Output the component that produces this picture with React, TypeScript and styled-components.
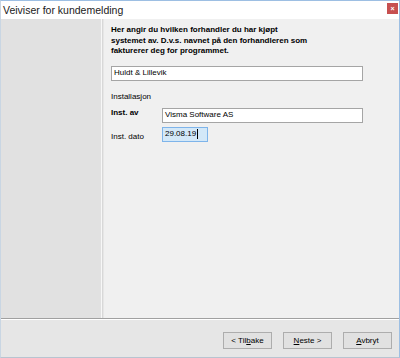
import styled, { createGlobalStyle } from "styled-components";

const Global = createGlobalStyle`
  html, body {
    margin: 0;
    padding: 0;
    background: #ffffff;
  }
  * {
    box-sizing: border-box;
  }
`;

const Window = styled.div`
  width: 400px;
  height: 358px;
  display: flex;
  flex-direction: column;
  border: 1px solid #9dbfe3;
  border-left-color: #c9d6e3;
  border-bottom-color: #b8c4d0;
  background: #e6e6e6;
  font-family: "Liberation Sans", Arial, sans-serif;
  font-size: 8px;
  color: #000;
`;

const TitleBar = styled.div`
  height: 18px;
  display: flex;
  align-items: flex-start;
  justify-content: space-between;
  background: #ffffff;
  padding-left: 2px;
`;

const Title = styled.span`
  font-size: 10.5px;
  line-height: 12px;
  margin-top: 3px;
  color: #1a1a1a;
`;

const CloseButton = styled.div`
  width: 11px;
  height: 11px;
  margin-top: 2px;
  margin-right: 1px;
  background: #c75050;
  display: flex;
  align-items: center;
  justify-content: center;
  color: #fff;
  font-size: 7px;
  line-height: 1;
  font-weight: bold;
`;

const Main = styled.div`
  height: 299px;
  display: flex;
`;

const SidePanel = styled.div`
  width: 101px;
  background: #e1e1e1;
  border-right: 1px solid #f7f7f7;
`;

const Divider = styled.div`
  width: 2px;
  background: #d8d8d8;
  border-right: 1px solid #e6e6e6;
`;

const Content = styled.div`
  flex: 1;
  background: #f0f0f0;
  padding: 6px 0 0 7px;
  display: flex;
  flex-direction: column;
`;

const Intro = styled.p`
  margin: 0;
  font-weight: bold;
  line-height: 10.5px;
  width: 200px;
`;

const TextField = styled.div<{ $width: number; $focused?: boolean }>`
  width: ${(p) => p.$width}px;
  height: 15px;
  display: flex;
  align-items: center;
  padding-left: 2px;
  background: ${(p) => (p.$focused ? "#d3e8f8" : "#ffffff")};
  border: 1px solid ${(p) => (p.$focused ? "#7eb4ea" : "#a5a5a5")};
  line-height: 1;
  white-space: nowrap;
`;

const Caret = styled.span`
  display: inline-block;
  width: 1px;
  height: 10px;
  background: #000;
  margin-left: 1px;
`;

const DealerField = styled(TextField)`
  margin-top: 9px;
`;

const SectionLabel = styled.div`
  margin-top: 11px;
  line-height: 10px;
  color: #000;
`;

const FormGrid = styled.div`
  margin-top: 6px;
  display: grid;
  grid-template-columns: 51px auto;
  row-gap: 4px;
  align-items: center;
  justify-content: start;
`;

const FieldLabel = styled.span<{ $bold?: boolean }>`
  font-weight: ${(p) => (p.$bold ? "bold" : "normal")};
  line-height: 10px;
  align-self: ${(p) => (p.$bold ? "start" : "end")};
`;

const Separator = styled.div`
  height: 2px;
  border-top: 1px solid #a0a0a0;
  border-bottom: 1px solid #ffffff;
`;

const Footer = styled.div`
  flex: 1;
  display: flex;
  justify-content: flex-end;
  align-items: flex-start;
  gap: 11px;
  padding: 12px 7px 0 0;
  background: #e6e6e6;
`;

const Button = styled.button`
  width: 49px;
  height: 17px;
  padding: 0;
  background: #e1e1e1;
  border: 1px solid #adadad;
  font-family: "Liberation Sans", Arial, sans-serif;
  font-size: 8px;
  color: #000;
  line-height: 1;
  u {
    text-decoration: underline;
  }
`;

export default function App() {
  return (
    <>
      <Global />
      <Window>
        <TitleBar>
          <Title>Veiviser for kundemelding</Title>
          <CloseButton>×</CloseButton>
        </TitleBar>
        <Main>
          <SidePanel />
          <Divider />
          <Content>
            <Intro>
              Her angir du hvilken forhandler du har kjøpt systemet av. D.v.s. navnet på
              den forhandleren som fakturerer deg for programmet.
            </Intro>
            <DealerField $width={252}>Huldt &amp; Lillevik</DealerField>
            <SectionLabel>Installasjon</SectionLabel>
            <FormGrid>
              <FieldLabel $bold>Inst. av</FieldLabel>
              <TextField $width={201}>Visma Software AS</TextField>
              <FieldLabel>Inst. dato</FieldLabel>
              <TextField $width={46} $focused>
                29.08.19
                <Caret />
              </TextField>
            </FormGrid>
          </Content>
        </Main>
        <Separator />
        <Footer>
          <Button>
            &lt; Til<u>b</u>ake
          </Button>
          <Button>
            <u>N</u>este &gt;
          </Button>
          <Button>
            <u>A</u>vbryt
          </Button>
        </Footer>
      </Window>
    </>
  );
}
